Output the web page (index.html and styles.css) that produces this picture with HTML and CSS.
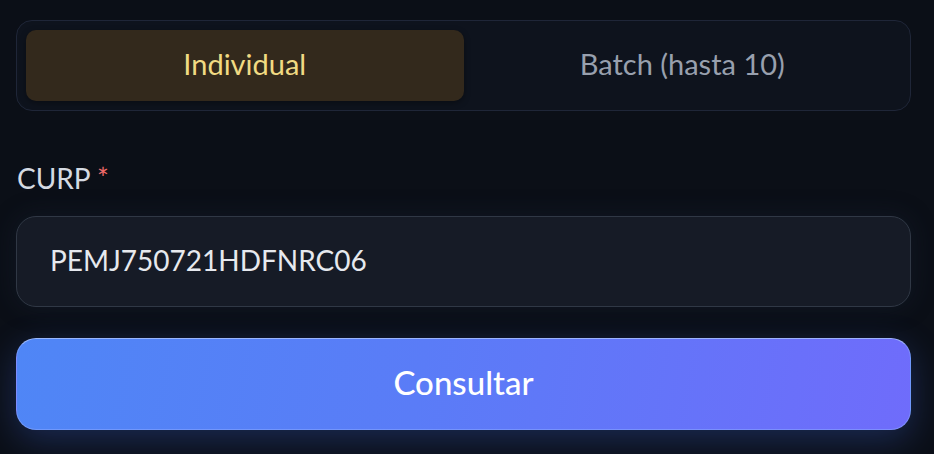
FILE: index.html
```html
<!DOCTYPE html>
<html lang="es">
<head>
<meta charset="utf-8">
<title>Consulta CURP</title>
<link rel="stylesheet" href="styles.css">
</head>
<body>
<main class="panel">
  <div class="tabs">
    <button class="tab tab-active">Individual</button>
    <button class="tab">Batch (hasta 10)</button>
  </div>
  <label class="label" for="curp">CURP <span class="req">*</span></label>
  <div class="input">
    <span class="input-text" id="curp">PEMJ750721HDFNRC06</span>
  </div>
  <button class="submit">Consultar</button>
</main>
</body>
</html>
```

FILE: styles.css
```css
html, body {
  margin: 0;
  padding: 0;
  height: 100%;
}
body {
  background: #0b0f17;
  font-family: Lato, "Open Sans", "DejaVu Sans", sans-serif;
  overflow: hidden;
}
.panel {
  width: 895px;
  padding: 20px 0 0 16px;
  display: flex;
  flex-direction: column;
}
.tabs {
  display: flex;
  height: 91px;
  box-sizing: border-box;
  padding: 9px;
  border: 1px solid #1f2638;
  border-radius: 16px;
  background: #0e131d;
}
.tab {
  flex: 1;
  border: none;
  background: transparent;
  font-family: inherit;
  font-size: 29px;
  color: #98a0ae;
  border-radius: 10px;
  padding: 0 0 4px 0;
}
.tab-active {
  background: #33291c;
  color: #f1da83;
  box-shadow: 0 2px 6px rgba(0,0,0,0.35);
}
.label {
  margin-top: 49px;
  font-size: 28px;
  line-height: 36px;
  color: #d5dae2;
  padding-left: 1px;
}
.req {
  color: #f06a6a;
}
.input {
  margin-top: 20px;
  height: 91px;
  box-sizing: border-box;
  border: 1.5px solid #303845;
  border-radius: 20px;
  background: #161b26;
  display: flex;
  align-items: center;
  padding: 0 0 4px 33px;
  box-shadow: 0 0 24px rgba(30,40,60,0.35);
}
.input-text {
  font-size: 28px;
  color: #e6e9ee;
}
.submit {
  margin-top: 31px;
  height: 92px;
  border: 1px solid rgba(140,170,255,0.55);
  border-top-color: rgba(170,195,255,0.8);
  border-radius: 20px;
  background: linear-gradient(100deg, #4f86f6 0%, #5a7cf7 45%, #6f6cfb 100%);
  color: #ffffff;
  font-family: inherit;
  font-size: 33px;
  font-weight: 500;
  box-shadow: 0 10px 34px rgba(70,110,240,0.28);
  padding: 0 0 4px 0;
}
```
